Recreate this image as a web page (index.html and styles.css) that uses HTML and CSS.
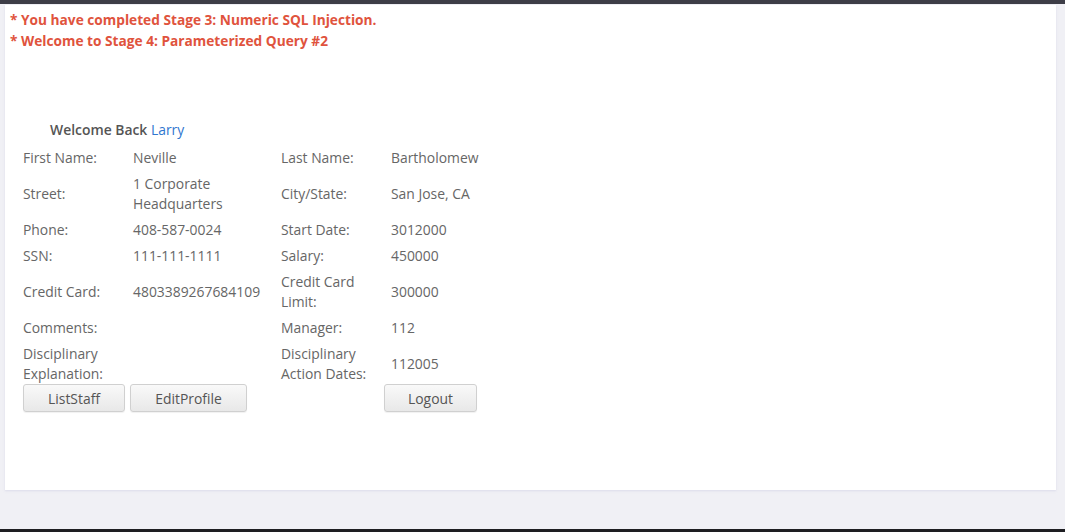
FILE: index.html
```html
<!DOCTYPE html>
<html lang="en">
<head>
    <meta charset="UTF-8">
    <title>Parameterized Query #2</title>
    <link rel="stylesheet" href="styles.css">
</head>
<body>
    <div class="page">
        <div class="lesson">
            <div class="messages">
                <div>* You have completed Stage 3: Numeric SQL Injection.</div>
                <div>* Welcome to Stage 4: Parameterized Query #2</div>
            </div>

            <div class="profile">
                <div class="welcome">Welcome Back <span class="user">Larry</span></div>
                <table class="details">
                    <colgroup>
                        <col class="c-label">
                        <col class="c-value">
                        <col class="c-label">
                        <col class="c-value2">
                    </colgroup>
                    <tr>
                        <td>First Name:</td><td>Neville</td>
                        <td>Last Name:</td><td>Bartholomew</td>
                    </tr>
                    <tr>
                        <td>Street:</td><td>1 Corporate Headquarters</td>
                        <td>City/State:</td><td>San Jose, CA</td>
                    </tr>
                    <tr>
                        <td>Phone:</td><td>408-587-0024</td>
                        <td>Start Date:</td><td>3012000</td>
                    </tr>
                    <tr>
                        <td>SSN:</td><td>111-111-1111</td>
                        <td>Salary:</td><td>450000</td>
                    </tr>
                    <tr>
                        <td>Credit Card:</td><td>4803389267684109</td>
                        <td>Credit Card Limit:</td><td>300000</td>
                    </tr>
                    <tr>
                        <td>Comments:</td><td></td>
                        <td>Manager:</td><td>112</td>
                    </tr>
                    <tr>
                        <td>Disciplinary Explanation:</td><td></td>
                        <td>Disciplinary Action Dates:</td><td>112005</td>
                    </tr>
                </table>
                <div class="actions">
                    <button class="btn btn-list">ListStaff</button>
                    <button class="btn btn-edit">EditProfile</button>
                    <button class="btn btn-logout">Logout</button>
                </div>
            </div>
        </div>
    </div>
    <div class="footer"></div>
</body>
</html>
```

FILE: styles.css
```css
html, body {
    margin: 0;
    padding: 0;
}

body {
    height: 532px;
    display: flex;
    flex-direction: column;
    background-color: #f0f0f5;
    border-top: 4px solid #3d3d47;
    box-sizing: border-box;
    font-family: "Open Sans", "Noto Sans", sans-serif;
    font-size: 13.9px;
    line-height: 20px;
    color: #666;
    overflow: hidden;
}

.page {
    flex: 1;
    padding: 1px 9px 39px 5px;
}

.lesson {
    background-color: #fff;
    height: 100%;
    padding: 4px 0 0 5px;
    box-sizing: border-box;
    box-shadow: 0 1px 2px rgba(200, 200, 225, 0.5);
}

.messages {
    color: #e0533d;
    font-weight: bold;
    font-size: 13.7px;
    line-height: 21px;
}

.profile {
    margin-top: 69px;
    padding-left: 13px;
}

.welcome {
    font-weight: 600;
    color: #555;
    padding-left: 27px;
    margin-bottom: 5px;
}

.user {
    font-weight: normal;
    color: #2f76cf;
}

.details {
    border-collapse: collapse;
    table-layout: fixed;
    width: 500px;
}

.c-label {
    width: 110px;
}

.c-value {
    width: 148px;
}

.c-value2 {
    width: 132px;
}

.details td {
    padding: 3px 10px 3px 0;
    vertical-align: middle;
}

.actions {
    display: flex;
    margin-top: -3px;
}

.btn {
    height: 28px;
    font-family: "Open Sans", "Noto Sans", sans-serif;
    font-size: 13.9px;
    color: #555;
    background: linear-gradient(#f9f9f9, #e8e8e8);
    border: 1px solid #d0d0d0;
    border-radius: 3px;
    box-shadow: 0 1px 1px rgba(0, 0, 0, 0.06);
    padding: 0;
    cursor: pointer;
}

.btn-list {
    width: 102px;
}

.btn-edit {
    width: 117px;
    margin-left: 5px;
}

.btn-logout {
    width: 93px;
    margin-left: 137px;
}

.footer {
    height: 3px;
    background-color: #1e1e22;
}
```
